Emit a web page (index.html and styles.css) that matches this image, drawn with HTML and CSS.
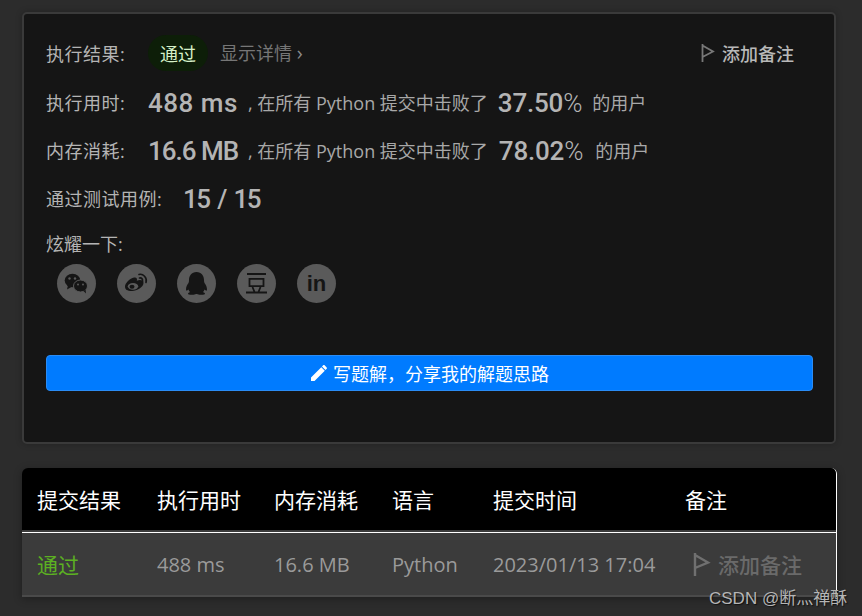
FILE: index.html
```html
<!DOCTYPE html>
<html lang="zh-CN">
<head>
<meta charset="utf-8">
<title>提交结果</title>
<link rel="stylesheet" href="styles.css">
</head>
<body>
<main class="page">
  <section class="card">
    <div class="row row-first">
      <span class="label">执行结果:</span>
      <span class="pill">通过</span>
      <span class="details">显示详情 <span class="chev">›</span></span>
      <span class="note">
        <svg class="flag" viewBox="0 0 14 18" width="14" height="18"><path d="M1.5 0v18M1.500 1.500L12 7.500 1.500 13" fill="none" stroke="#787878" stroke-width="1.800"/></svg>
        添加备注
      </span>
    </div>
    <div class="row">
      <span class="label">执行用时:</span>
      <span class="num num-w num-ms">488 ms</span>
      <span class="text">, 在所有 Python 提交中击败了</span>
      <span class="num pct">37.50<span class="thin">%</span></span>
      <span class="text users">的用户</span>
    </div>
    <div class="row">
      <span class="label">内存消耗:</span>
      <span class="num num-w num-mb">16.6 MB</span>
      <span class="text">, 在所有 Python 提交中击败了</span>
      <span class="num pct pct-b">78.02<span class="thin">%</span></span>
      <span class="text users users-b">的用户</span>
    </div>
    <div class="row">
      <span class="label label-wide">通过测试用例:</span>
      <span class="num num-cases">15 / 15</span>
    </div>
    <div class="share-label">炫耀一下:</div>
    <div class="share">
      <span class="social">
        <svg viewBox="0 0 39 39" width="39" height="39"><ellipse cx="15.500" cy="16.500" rx="7.800" ry="6.800" fill="#151515"/><path d="M11 21l-1 4.500 4.500-2.500z" fill="#151515"/><ellipse cx="23.500" cy="22" rx="7" ry="6" fill="#151515" stroke="#5a5a5a" stroke-width="1"/><path d="M26.500 27l2.500 2.500-.5-4z" fill="#151515"/><circle cx="12.500" cy="14.500" r="1.200" fill="#5a5a5a"/><circle cx="18" cy="14.500" r="1.200" fill="#5a5a5a"/><circle cx="21" cy="20.500" r="1" fill="#5a5a5a"/><circle cx="26" cy="20.500" r="1" fill="#5a5a5a"/></svg>
      </span>
      <span class="social">
        <svg viewBox="0 0 39 39" width="39" height="39"><path d="M8 22.500c0-3.500 5-8 9-9 2.500-.5 3.500.8 2.800 3.200 3.500-1.200 6.700-.6 6.700 2.300 0 4-6.500 8-11.500 8S8 25.500 8 22.500z" fill="#151515"/><ellipse cx="16" cy="22.300" rx="5.200" ry="3.400" fill="#5a5a5a"/><ellipse cx="15" cy="22.700" rx="2.500" ry="2" fill="#151515"/><path d="M22 10.500c4-1 8.500 3 7 8M22.500 14c2-.5 3.500 1 3 3.500" fill="none" stroke="#151515" stroke-width="1.600" stroke-linecap="round"/></svg>
      </span>
      <span class="social">
        <svg viewBox="0 0 39 39" width="39" height="39"><path d="M19.500 8c-5 0-7.500 4-7.500 8 0 1 0 2-.5 3-1.500 2-2.500 4-2.500 6.500 0 1.500 1 1.500 2.500 0 .3 1 .8 2 1.500 2.500-1 .5-2 1-2 1.800 0 1 2.500 1.200 5.500 1 1.500-.5 2.500-.8 3-.8s1.500.3 3 .8c3 .2 5.500 0 5.500-1 0-.8-1-1.300-2-1.800.7-.5 1.200-1.500 1.500-2.500 1.500 1.500 2.500 1.500 2.500 0 0-2.500-1-4.500-2.500-6.500-.5-1-.5-2-.5-3 0-4-2.500-8-7.500-8z" fill="#151515"/></svg>
      </span>
      <span class="social">
        <svg viewBox="0 0 39 39" width="39" height="39"><path d="M10 10h19M12.500 14.800h14v7.400h-14zM15.500 23l2 5M23.500 23l-2 5M9 28.500h21" fill="none" stroke="#151515" stroke-width="1.800"/></svg>
      </span>
      <span class="social social-in">in</span>
    </div>
    <button class="solution" type="button">
      <svg viewBox="0 0 18 18" width="18" height="18"><path d="M1 13.500V17h3.500L14.800 6.700l-3.500-3.500zM16.700 4.800c.4-.4.400-1 0-1.400L14.600 1.300c-.4-.4-1-.4-1.400 0l-1.200 1.200 3.500 3.500z" fill="#fff"/></svg>
      <span>写题解，分享我的解题思路</span>
    </button>
  </section>

  <section class="table">
    <div class="thead">
      <span>提交结果</span>
      <span>执行用时</span>
      <span>内存消耗</span>
      <span>语言</span>
      <span>提交时间</span>
      <span>备注</span>
    </div>
    <div class="tbody">
      <span class="ok">通过</span>
      <span>488 ms</span>
      <span>16.6 MB</span>
      <span>Python</span>
      <span>2023/01/13 17:04</span>
      <span class="muted">
        <svg viewBox="0 0 18 24" width="18" height="24"><path d="M2 1v23M2 3l13 7.500L2 16" fill="none" stroke="#707070" stroke-width="2.400"/></svg>
        添加备注
      </span>
    </div>
  </section>
</main>
<div class="watermark">CSDN @断灬禅酥</div>
</body>
</html>
```
FILE: styles.css
```css
* { box-sizing: border-box; }
html, body { margin: 0; height: 616px; overflow: hidden; }
body {
  background: #2c2c2c;
  color: #b4b4b4;
  font-family: "Open Sans", "Noto Sans CJK SC", sans-serif;
  font-size: 18px;
  position: relative;
}
.page { padding: 12px 26px 0 22px; }

.card {
  height: 432px;
  background: #151515;
  border: 2px solid #3a3a3a;
  border-radius: 5px;
  padding: 14px 22px 0;
  box-shadow: 0 0 6px rgba(0, 0, 0, .25);
}
.row { display: flex; align-items: center; height: 48px; white-space: nowrap; }
.row-first { height: 49px; margin-bottom: 2px; }
.label { width: 102px; flex: none; letter-spacing: .5px; margin-top: -2px; }
.label-wide { width: 137px; }
.row-first .label { margin-top: 0; }
.pill {
  width: 60px;
  height: 36px;
  border-radius: 18px;
  background: #0d1e08;
  color: #d6f0c8;
  display: flex;
  align-items: center;
  justify-content: center;
}
.details { color: #767676; margin-left: 12px; }
.chev { color: #8a8a8a; font-size: 20px; }
.note {
  margin-left: auto;
  margin-right: 18px;
  display: flex;
  align-items: center;
  gap: 7px;
  color: #b8b8b8;
  font-weight: 500;
}
.num {
  font-family: Roboto, sans-serif;
  font-weight: 500;
  font-size: 26px;
  color: #b4b4b4;
}
.num-w { width: 100px; flex: none; }
.num-ms { letter-spacing: .5px; }
.num-mb { letter-spacing: -1px; }
.num-cases { letter-spacing: -1.600px; word-spacing: 3px; }
.text { color: #a8a8a8; margin-top: -2px; }
.pct { margin-left: 10px; letter-spacing: -.2px; }
.pct-b { margin-left: 11px; }
.thin { font-weight: 300; }
.users { margin-left: 10px; }
.users-b { margin-left: 12px; }

.share-label { margin-top: 10px; height: 22px; line-height: 22px; }
.share { display: flex; gap: 21px; padding: 9px 0 0 11px; }
.social {
  width: 39px;
  height: 39px;
  border-radius: 50%;
  background: #5a5a5a;
  display: flex;
  align-items: center;
  justify-content: center;
  flex: none;
}
.social-in {
  color: #151515;
  font-family: "Liberation Sans", sans-serif;
  font-weight: 700;
  font-size: 22px;
}

.solution {
  margin-top: 52px;
  width: 767px;
  height: 36px;
  background: #007bff;
  border: 1px solid #2a8cf5;
  border-radius: 4px;
  color: #fff;
  font: inherit;
  display: flex;
  align-items: center;
  justify-content: center;
  gap: 5px;
  padding: 0;
}

.table {
  margin: 24px -1px 0 0;
  height: 129px;
  border-radius: 6px 6px 0 0;
  border-right: 1px solid #fff;
  box-shadow: 0 2px 8px rgba(0, 0, 0, .3);
  overflow: hidden;
  font-size: 21px;
}
.thead, .tbody { display: grid; grid-template-columns: 120px 117px 118px 101px 192px 1fr; }
.thead {
  height: 65px;
  background: #000;
  color: #fff;
  border-bottom: 1px solid #fff;
  box-shadow: inset 0 -2px 0 #3b3b3b;
  padding-bottom: 2px;
  align-items: center;
}
.thead span, .tbody span { padding-left: 15px; white-space: nowrap; }
.tbody {
  height: 64px;
  background: #3b3b3b;
  color: #9a9a9a;
  font-size: 20px;
  align-items: center;
  border-bottom: 2px solid #4a4a4a;
}
.tbody .ok { color: #5cb022; font-size: 21px; }
.tbody .muted { display: flex; align-items: center; gap: 7px; color: #6a6a6a; font-size: 21px; font-weight: 500; padding-left: 23px; }

.watermark {
  position: absolute;
  left: 709px;
  top: 584px;
  font-family: "Liberation Sans", "Noto Sans CJK SC", sans-serif;
  font-size: 17px;
  color: #b5b5b5;
  text-shadow: 1px 1px 1px rgba(0, 0, 0, .6);
  white-space: nowrap;
}
```
